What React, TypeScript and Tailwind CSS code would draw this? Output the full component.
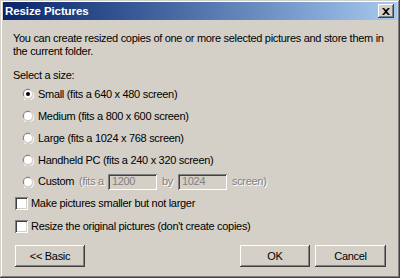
import React from 'react';

const font = "font-['Liberation_Sans',Arial,sans-serif]";
const raised =
  'shadow-[inset_-1px_-1px_#404040,inset_1px_1px_#ffffff,inset_-2px_-2px_#808080,inset_2px_2px_#d4d0c8]';
const sunken =
  'shadow-[inset_1px_1px_#808080,inset_-1px_-1px_#ffffff,inset_2px_2px_#404040,inset_-2px_-2px_#d4d0c8]';

function Radio({ checked }: { checked?: boolean }) {
  return (
    <svg width="12" height="12" viewBox="0 0 12 12" className="shrink-0">
      <path d="M8 1.5A5 5 0 0 0 1.5 8" stroke="#808080" strokeWidth="1" fill="none" />
      <path d="M7.5 2.5A4 4 0 0 0 2.5 7.5" stroke="#404040" strokeWidth="1" fill="none" />
      <circle cx="6" cy="6" r="4" fill="#ffffff" />
      <path d="M2 10.5A5 5 0 0 0 10.5 4" stroke="#ffffff" strokeWidth="1" fill="none" />
      <path d="M3 9.5A4 4 0 0 0 9.5 3" stroke="#d4d0c8" strokeWidth="1" fill="none" />
      {checked && <circle cx="6" cy="6" r="2" fill="#000000" />}
    </svg>
  );
}

function RadioRow({ label, checked }: { label: string; checked?: boolean }) {
  return (
    <div className="flex h-[22px] items-center gap-[4px] pl-[9px]">
      <Radio checked={checked} />
      <span>{label}</span>
    </div>
  );
}

function CheckRow({ label }: { label: string }) {
  return (
    <div className="flex h-[22px] items-center gap-[3px] pl-[2px]">
      <div className={`h-[13px] w-[13px] shrink-0 bg-white ${sunken}`} />
      <span>{label}</span>
    </div>
  );
}

function Btn({ label, w }: { label: string; w: string }) {
  return (
    <button className={`flex h-[22px] ${w} items-center justify-center bg-[#d4d0c8] ${raised}`}>
      {label}
    </button>
  );
}

export default function App() {
  return (
    <div
      className={`flex h-[278px] w-[400px] flex-col overflow-hidden bg-[#d4d0c8] text-[11px] leading-[13px] tracking-[-0.3px] text-black ${font} shadow-[inset_-1px_-1px_#404040,inset_1px_1px_#d4d0c8,inset_-2px_-2px_#808080,inset_2px_2px_#ffffff]`}
    >
      {/* title bar */}
      <div className="mx-[3px] mt-[2px] flex h-[18px] items-center justify-between bg-gradient-to-r from-[#0a246a] to-[#a6caf0] pl-[2px] pr-[3px]">
        <span className="text-[11.5px] font-bold tracking-[-0.1px] text-white">Resize Pictures</span>
        <div className={`flex h-[14px] w-[16px] items-center justify-center bg-[#d4d0c8] ${raised}`}>
          <svg width="8" height="7" viewBox="0 0 8 7">
            <path d="M0 0h2l2 2 2-2h2L5 3.5 8 7H6L4 5 2 7H0l3-3.5z" fill="#000" />
          </svg>
        </div>
      </div>

      <div className="flex flex-1 flex-col pl-[13px] pr-[14px]">
        <p className="mt-[12px] -mr-[8px]">
          You can create resized copies of one or more selected pictures and store them in the current folder.
        </p>
        <p className="mt-[11px]">Select a size:</p>

        <div className="mt-[1px] flex flex-col">
          <RadioRow label="Small (fits a 640 x 480 screen)" checked />
          <RadioRow label="Medium (fits a 800 x 600 screen)" />
          <RadioRow label="Large (fits a 1024 x 768 screen)" />
          <RadioRow label="Handheld PC (fits a 240 x 320 screen)" />
          <div className="flex h-[21px] items-center gap-[4px] pl-[9px]">
            <Radio />
            <span>Custom</span>
            <span className="ml-[1px] text-[#808080] [text-shadow:1px_1px_#ffffff]">(fits a</span>
            <div className={`flex h-[16px] w-[49px] items-center bg-[#d4d0c8] pl-[4px] text-[#808080] ${sunken}`}>
              1200
            </div>
            <span className="mx-[1px] text-[#808080] [text-shadow:1px_1px_#ffffff]">by</span>
            <div className={`flex h-[16px] w-[49px] items-center bg-[#d4d0c8] pl-[4px] text-[#808080] ${sunken}`}>
              1024
            </div>
            <span className="ml-[1px] text-[#808080] [text-shadow:1px_1px_#ffffff]">screen)</span>
          </div>
        </div>

        <div className="flex flex-col">
          <CheckRow label="Make pictures smaller but not larger" />
          <div className="mt-[1px]">
            <CheckRow label="Resize the original pictures (don't create copies)" />
          </div>
        </div>

        <div className="mt-[8px] flex items-center pl-[2px]">
          <Btn label="<< Basic" w="w-[70px]" />
          <div className="flex-1" />
          <div className="flex gap-[5px]">
            <Btn label="OK" w="w-[70px]" />
            <Btn label="Cancel" w="w-[71px]" />
          </div>
        </div>
      </div>
    </div>
  );
}
